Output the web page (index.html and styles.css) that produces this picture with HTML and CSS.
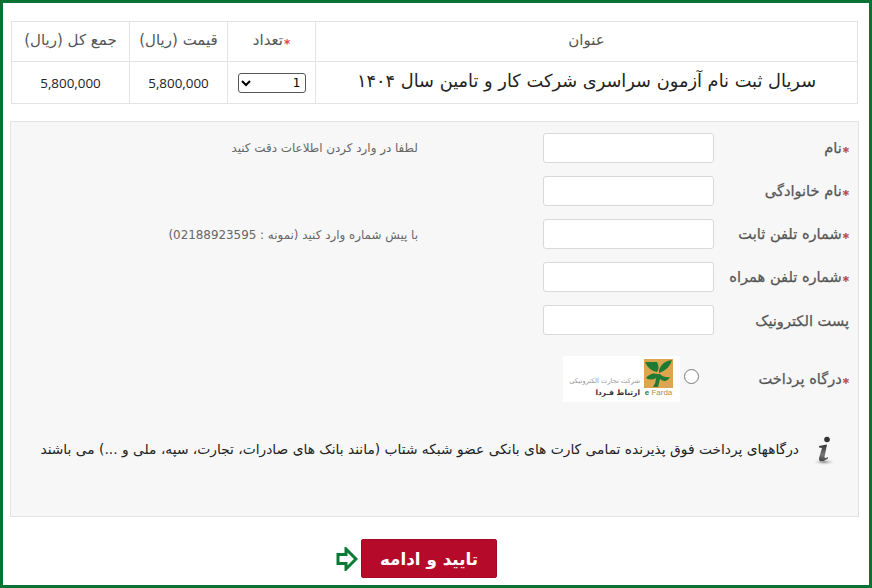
FILE: index.html
```html
<!DOCTYPE html>
<html lang="fa" dir="rtl">
<head>
    <meta charset="UTF-8">
    <title>ثبت نام</title>
    <link rel="stylesheet" href="styles.css">
</head>
<body>
    <div class="page">
        <table class="order">
            <tr>
                <th>عنوان</th>
                <th class="col-qty"><span class="req">*</span>تعداد</th>
                <th class="col-price">قیمت (ریال)</th>
                <th class="col-total">جمع کل (ریال)</th>
            </tr>
            <tr>
                <td class="title">سریال ثبت نام آزمون سراسری شرکت کار و تامین سال ۱۴۰۴</td>
                <td>
                    <select class="qty"><option>1</option><option>2</option></select>
                </td>
                <td class="num">5,800,000</td>
                <td class="num">5,800,000</td>
            </tr>
        </table>

        <div class="panel">
            <div class="row">
                <label><span class="req">*</span>نام</label>
                <input type="text">
                <span class="hint">لطفا در وارد کردن اطلاعات دقت کنید</span>
            </div>
            <div class="row">
                <label><span class="req">*</span>نام خانوادگی</label>
                <input type="text">
            </div>
            <div class="row">
                <label><span class="req">*</span>شماره تلفن ثابت</label>
                <input type="text">
                <span class="hint hint-low">با پیش شماره وارد کنید (نمونه : 02188923595)</span>
            </div>
            <div class="row">
                <label><span class="req">*</span>شماره تلفن همراه</label>
                <input type="text">
            </div>
            <div class="row">
                <label>پست الکترونیک</label>
                <input type="text">
            </div>
            <div class="row gateway">
                <label><span class="req">*</span>درگاه پرداخت</label>
                <div class="gateway-choice">
                    <input type="radio" name="gateway" class="radio">
                    <div class="gateway-logo">
                        <div class="gateway-mark">
                            <svg width="29" height="29" viewBox="0 0 29 29">
                                <rect width="29" height="29" fill="#dba64e"/>
                                <path d="M1 3 L13 3 Q16 9 13 13 Q5 12 1 3 Z M15 11 Q18 2 28 1 Q26 10 15 14 Z M2 19 Q7 13 13 15 L16 15 Q20 19 26 18 Q22 25 16 20 L14 28 L9 28 Q12 24 12 19 Q7 22 2 19 Z" fill="#1f7a34"/>
                            </svg>
                            <span class="efarda"><b>e</b> Farda</span>
                        </div>
                        <div class="gateway-text">
                            <span class="gateway-sub">شرکت تجارت الکترونیکی</span>
                            <span class="gateway-name">ارتباط فـردا</span>
                        </div>
                    </div>
                </div>
            </div>
            <div class="note">
                <svg class="info" width="26" height="30" viewBox="0 0 26 30">
                    <defs>
                        <radialGradient id="shade">
                            <stop offset="0" stop-color="#8a8a8a"/>
                            <stop offset="1" stop-color="#f7f7f7" stop-opacity="0"/>
                        </radialGradient>
                        <linearGradient id="stem" x1="0" y1="0" x2="0" y2="1">
                            <stop offset="0" stop-color="#333"/>
                            <stop offset="0.6" stop-color="#777"/>
                            <stop offset="1" stop-color="#444"/>
                        </linearGradient>
                    </defs>
                    <ellipse cx="13" cy="26" rx="12" ry="3.5" fill="url(#shade)"/>
                    <circle cx="16" cy="3.5" r="2.8" fill="#333"/>
                    <path d="M8 10 L16 8.5 L13.5 21 Q13.5 23 17 21 L17 22.5 Q12 26 9 25 Q7.5 24.5 8 22 L11 12 L8 11.5 Z" fill="url(#stem)"/>
                </svg>
                <p>درگاههای پرداخت فوق پذیرنده تمامی کارت های بانکی عضو شبکه شتاب (مانند بانک های صادرات، تجارت، سپه، ملی و ...) می باشند</p>
            </div>
        </div>

        <div class="actions">
            <button type="button" class="submit">تایید و ادامه</button>
            <svg class="arrow" width="22" height="24" viewBox="0 0 22 24">
                <path d="M20 12 L10 2 L10 7.5 L2 7.5 L2 16.5 L10 16.5 L10 22 Z" fill="#fff" stroke="#0b7a35" stroke-width="3"/>
            </svg>
        </div>
    </div>
</body>
</html>
```

FILE: styles.css
```css
* {
    box-sizing: border-box;
}
html, body {
    margin: 0;
    padding: 0;
}
body {
    font-family: "DejaVu Sans", sans-serif;
    background-color: white;
    color: #333;
}
.page {
    height: 588px;
    border: 3px solid #0b7236;
    padding: 18px 10px 0 7px;
    overflow: hidden;
}
.req {
    color: #e8414f;
    font-size: 12px;
    font-weight: bold;
    margin-left: 1px;
    vertical-align: -3px;
    line-height: 1;
}

/* order table */
.order {
    width: 847px;
    margin: 0 1px 0 0;
    border-collapse: collapse;
    table-layout: fixed;
    font-size: 15px;
}
.order th, .order td {
    border: 1px solid #e3e3e3;
    text-align: center;
}
.order th {
    height: 40px;
    padding-bottom: 4px;
    font-weight: normal;
    color: #555;
}
.order td {
    height: 42px;
}
.col-qty {
    width: 88px;
}
.col-price {
    width: 98px;
}
.col-total {
    width: 118px;
}
.order .title {
    font-size: 17.8px;
    color: #222;
    padding-bottom: 5px;
}
.order .num {
    font-family: "Open Sans", sans-serif;
    font-size: 13.4px;
    color: #222;
}
.qty {
    width: 68px;
    height: 20px;
    font-family: "DejaVu Sans", sans-serif;
    font-size: 12px;
    background: white;
    border: 1px solid #555;
    border-radius: 3px;
}

/* form panel */
.panel {
    width: 849px;
    height: 396px;
    margin-top: 17px;
    padding-top: 11px;
    background-color: #f7f7f7;
    border: 1px solid #e3e3e3;
}
.row {
    display: flex;
    align-items: center;
    height: 30px;
    margin-bottom: 13px;
    padding-right: 9px;
}
.row label {
    width: 126px;
    flex-shrink: 0;
    padding-top: 1px;
    font-size: 14.6px;
    color: #555;
    -webkit-text-stroke: 0.25px #555;
    white-space: nowrap;
}
.row input[type="text"] {
    width: 171px;
    height: 30px;
    margin-right: 9px;
    background: white;
    border: 1px solid #d9d9d9;
    border-radius: 3px;
}
.hint {
    margin-right: 125px;
    font-size: 11.9px;
    color: #666;
}
.hint-low {
    padding-top: 2px;
}
.gateway {
    height: 46px;
    margin-top: 21px;
    margin-bottom: 0;
}
.gateway-choice {
    display: flex;
    align-items: center;
    margin-right: 24px;
}
.radio {
    width: 15px;
    height: 15px;
    margin: 0 0 6px 4px;
}
.gateway-logo {
    display: flex;
    align-items: flex-start;
    gap: 4px;
    width: 117px;
    height: 46px;
    padding: 3px 7px 0 0;
    background: white;
}
.gateway-mark {
    display: flex;
    flex-direction: column;
    align-items: center;
    width: 29px;
}
.gateway-mark svg {
    display: block;
}
.efarda {
    direction: ltr;
    font-family: "Liberation Sans", sans-serif;
    font-size: 8px;
    color: #b98a3c;
    white-space: nowrap;
}
.efarda b {
    color: #1f7a34;
}
.gateway-text {
    display: flex;
    flex-direction: column;
    gap: 3px;
    margin-top: 18px;
    white-space: nowrap;
}
.gateway-sub {
    font-size: 6.7px;
    color: #999;
}
.gateway-name {
    font-size: 7.5px;
    font-weight: bold;
    color: #333;
}
.note {
    display: flex;
    align-items: center;
    margin-top: 30px;
    padding-right: 21px;
}
.info {
    flex-shrink: 0;
    margin-top: 4px;
}
.note p {
    margin: 0 12px 0 0;
    font-size: 13.8px;
    color: #222;
    white-space: nowrap;
}

/* submit */
.actions {
    display: flex;
    align-items: center;
    gap: 3px;
    margin-top: 22px;
    padding-right: 362px;
}
.submit {
    width: 136px;
    height: 39px;
    font-family: "DejaVu Sans", sans-serif;
    font-size: 16.8px;
    font-weight: bold;
    color: white;
    background-color: #b50a2a;
    border: 1px solid #a50826;
    border-radius: 2px;
}
.arrow {
    display: block;
}
```
